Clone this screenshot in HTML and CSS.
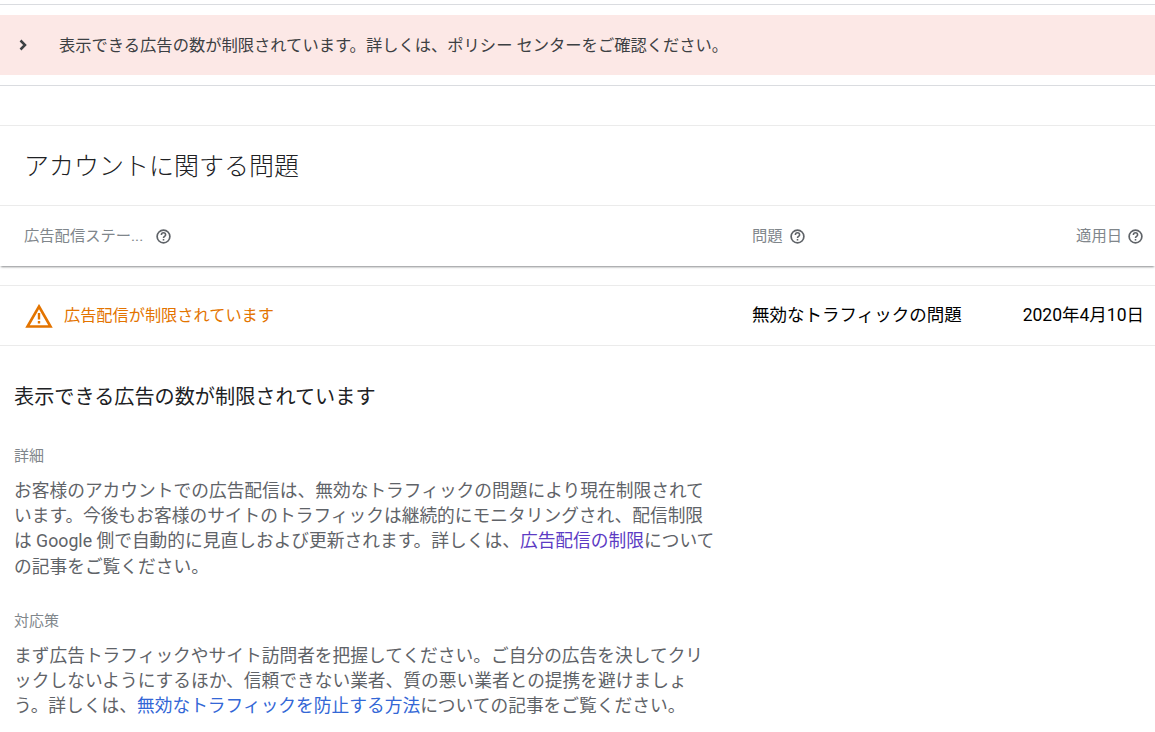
FILE: index.html
```html
<!DOCTYPE html>
<html lang="ja">
<head>
<meta charset="utf-8">
<title>アカウントに関する問題</title>
<link rel="stylesheet" href="styles.css">
</head>
<body>
<div class="top-line"></div>
<div class="banner">
  <svg class="chev" width="24" height="24" viewBox="0 0 24 24"><path d="M9.500 7.500l4.500 4.500-4.500 4.500" fill="none" stroke="#3c4043" stroke-width="2.500"/></svg>
  <span>表示できる広告の数が制限されています。詳しくは、ポリシー センターをご確認ください。</span>
</div>
<div class="spacer"></div>
<section class="title-row"><h1>アカウントに関する問題</h1></section>
<div class="head-row">
  <div class="col-status"><span>広告配信ステー...</span>
    <svg class="help" viewBox="0 0 24 24"><use href="#q"/></svg></div>
  <div class="col-issue"><span>問題</span>
    <svg class="help" viewBox="0 0 24 24"><use href="#q"/></svg></div>
  <div class="col-date"><span>適用日</span>
    <svg class="help" viewBox="0 0 24 24"><use href="#q"/></svg></div>
</div>
<div class="data-row">
  <div class="col-status warn">
    <svg class="tri" width="28" height="24" viewBox="0 0 28 24"><path d="M14 2.500L25.500 22.500H2.500Z" fill="none" stroke="#e37400" stroke-width="2.600"/><rect x="12.800" y="9" width="2.400" height="6.500" fill="#e37400"/><rect x="12.800" y="17" width="2.400" height="2.500" fill="#e37400"/></svg>
    <span>広告配信が制限されています</span>
  </div>
  <div class="col-issue dark">無効なトラフィックの問題</div>
  <div class="col-date dark">2020年4月10日</div>
</div>
<main class="detail">
  <h2>表示できる広告の数が制限されています</h2>
  <h3 class="label-a">詳細</h3>
  <p>お客様のアカウントでの広告配信は、無効なトラフィックの問題により現在制限されています。今後もお客様のサイトのトラフィックは継続的にモニタリングされ、配信制限は Google 側で自動的に見直しおよび更新されます。詳しくは、<a class="visited">広告配信の制限</a>についての記事をご覧ください。</p>
  <h3 class="label-b">対応策</h3>
  <p>まず広告トラフィックやサイト訪問者を把握してください。ご自分の広告を決してクリックしないようにするほか、信頼できない業者、質の悪い業者との提携を避けましょう。詳しくは、<a>無効なトラフィックを防止する方法</a>についての記事をご覧ください。</p>
</main>
<svg class="defs" width="0" height="0"><defs><g id="q"><circle cx="12" cy="12" r="9" fill="none" stroke="#5f6368" stroke-width="2.400"/><path d="M9 9.800a3 3 0 0 1 6 0c0 2-3 2.200-3 4.200" fill="none" stroke="#5f6368" stroke-width="2.200"/><rect x="10.900" y="15.500" width="2.200" height="2.200" fill="#5f6368"/></g></defs></svg>
</body>
</html>
```
FILE: styles.css
```css
html, body { margin: 0; padding: 0; background: #fff; }
body {
  width: 1155px;
  height: 732px;
  overflow: hidden;
  font-family: Roboto, "Noto Sans CJK JP", sans-serif;
  color: #3c4043;
}
.top-line { height: 4px; border-bottom: 1px solid #dadce0; margin-bottom: 10px; }
.banner {
  height: 60px;
  background: #fce8e6;
  display: flex;
  align-items: center;
  font-size: 16.300px;
  color: #3c4043;
  padding-left: 11px;
}
.banner span { padding-bottom: 2px; }
.chev { margin-right: 24px; flex: none; }
.spacer { height: 39px; margin-top: 10px; border-top: 1px solid #dadce0; border-bottom: 1px solid #ebebeb; }
.title-row { display: flex; align-items: center; padding: 0 0 3px 24px; box-sizing: border-box; height: 80px; border-bottom: 1px solid #ebebeb; }
h1 { margin: 0; font-size: 25px; font-weight: 300; color: #202124; }
.head-row, .data-row { display: flex; align-items: center; padding: 0 11px 0 24px; }
.head-row {
  height: 60px;
  font-size: 15.300px;
  color: #80868b;
  box-shadow: 0 2px 2px -1px rgba(60,64,67,.6);
  position: relative;
}
.head-row span { padding-bottom: 4px; }
.data-row { height: 59px; margin-top: 19px; border-top: 1px solid #ebebeb; border-bottom: 1px solid #ebebeb; font-size: 16px; }
.col-status { width: 728px; display: flex; align-items: center; gap: 12px; }
.col-issue { width: 250px; display: flex; align-items: center; gap: 6px; }
.col-date { flex: 1; display: flex; align-items: center; justify-content: flex-end; gap: 5px; white-space: nowrap; }
.help { width: 17px; height: 17px; flex: none; }
.warn { color: #e37400; font-size: 16.200px; gap: 11px; }
.warn span { padding-bottom: 3px; }
.tri { flex: none; margin-left: 1px; }
.dark { color: #000; }
.data-row .dark { font-size: 17.500px; line-height: 54px; padding-bottom: 2px; }
.detail { padding: 0 14px; }
h2 { margin: 38px 0 0; font-size: 20.150px; font-weight: 400; line-height: 26px; color: #202124; }
h3 { margin: 0; font-size: 15px; font-weight: 400; line-height: 20px; color: #80868b; }
.label-a { margin-top: 36px; }
.label-b { margin-top: 31px; }
p { margin: 13px 0 0; width: 704px; font-size: 17.730px; line-height: 25.200px; color: #5f6368; }
a { color: #3367d6; }
a.visited { color: #5c3bc4; }
.defs { position: absolute; }
```
